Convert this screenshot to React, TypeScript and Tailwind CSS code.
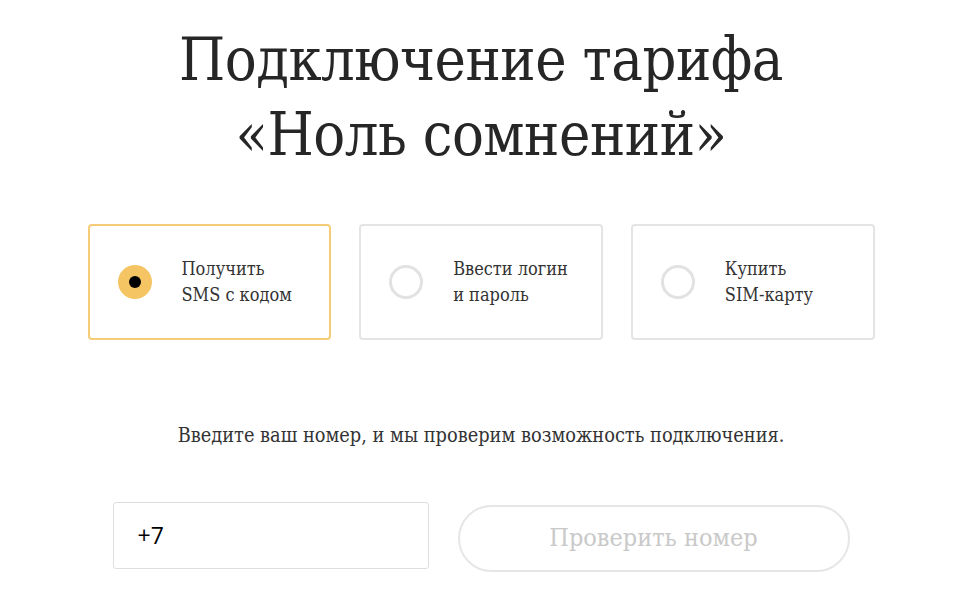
import { useState } from "react";

const serif = { fontFamily: '"DejaVu Serif Condensed", "DejaVu Serif", "Liberation Serif", serif' };

const options = [
  { id: "sms", lines: ["Получить", "SMS с кодом"] },
  { id: "login", lines: ["Ввести логин", "и пароль"] },
  { id: "sim", lines: ["Купить", "SIM-карту"] },
];

export default function App() {
  const [selected, setSelected] = useState("sms");
  const [phone, setPhone] = useState("+7");

  return (
    <div className="min-h-screen bg-white text-[#262626] pl-[7px]" style={serif}>
      <h1 className="pt-[22px] text-center text-[59px] leading-[75px] tracking-[-0.5px]">
        Подключение тарифа
        <br />
        «Ноль сомнений»
      </h1>

      <div className="mx-auto mt-[52px] flex w-[787px] gap-[28px]">
        {options.map((o) => {
          const active = o.id === selected;
          return (
            <button
              key={o.id}
              onClick={() => setSelected(o.id)}
              className={`flex h-[116px] flex-1 items-center rounded-[4px] border-2 bg-white pl-[28px] text-left ${
                active ? "border-[#f5cd79]" : "border-[#e4e4e4]"
              }`}
            >
              {active ? (
                <span className="flex h-[34px] w-[34px] items-center justify-center rounded-full bg-[#f5c563]">
                  <span className="h-[12px] w-[12px] rounded-full bg-black" />
                </span>
              ) : (
                <span className="h-[34px] w-[34px] rounded-full border-[3px] border-[#e2e2e2]" />
              )}
              <span className="ml-[30px] text-[18px] leading-[26px] text-[#333]">
                {o.lines[0]}
                <br />
                {o.lines[1]}
              </span>
            </button>
          );
        })}
      </div>

      <p className="mt-[81px] text-center text-[19.8px] text-[#333]">
        Введите ваш номер, и мы проверим возможность подключения.
      </p>

      <div className="mx-auto mt-[51px] flex w-[737px] items-start gap-[29px]">
        <input
          value={phone}
          onChange={(e) => setPhone(e.target.value)}
          className="h-[67px] w-[316px] rounded-[3px] border border-[#dedede] px-[24px] text-[23px] text-black outline-none"
          style={{ fontFamily: '"Open Sans", "Liberation Sans", sans-serif' }}
        />
        <button className="mt-[3px] h-[67px] flex-1 rounded-full border-2 border-[#e6e6e6] text-[25px] text-[#c9c9c9]">
          Проверить номер
        </button>
      </div>
    </div>
  );
}
